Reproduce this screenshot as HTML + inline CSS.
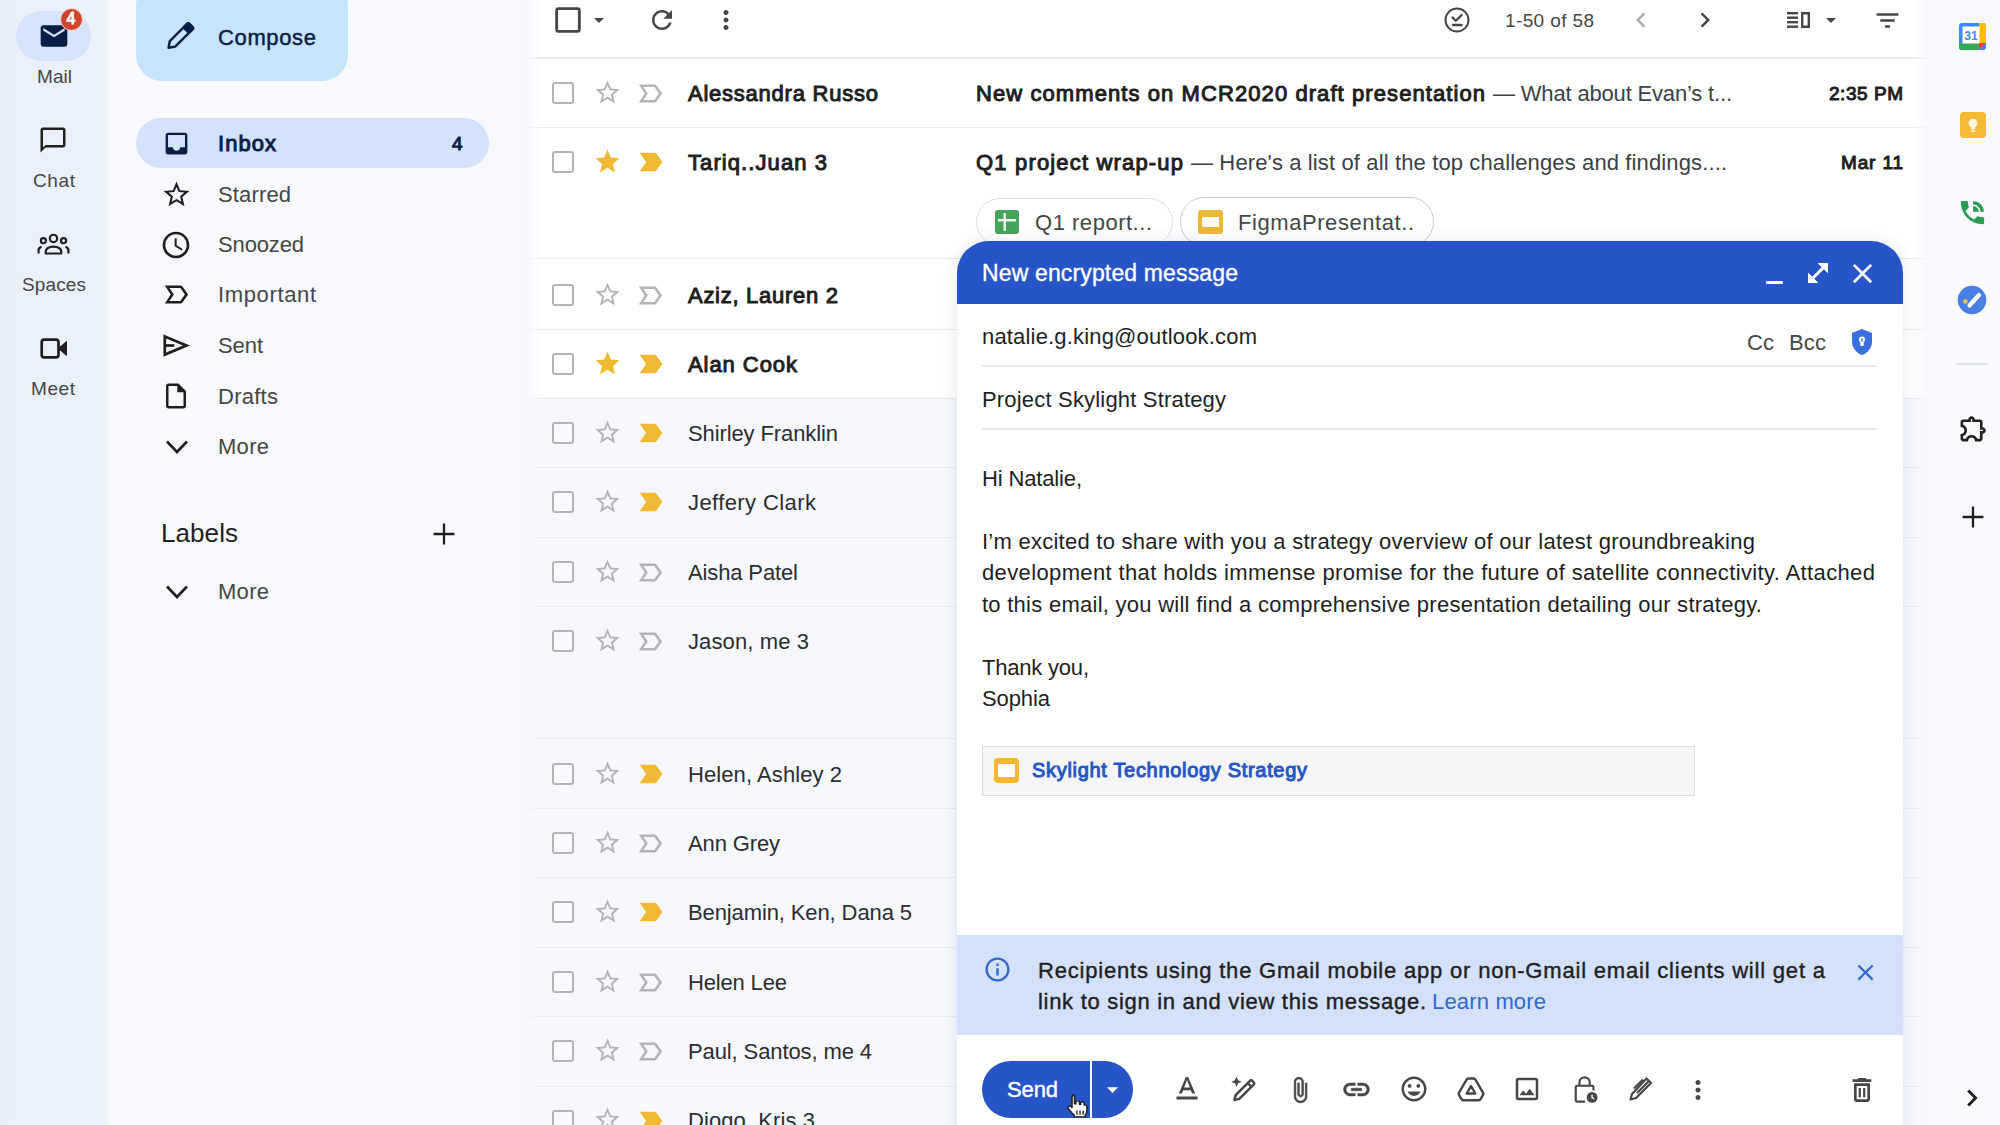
<!DOCTYPE html>
<html><head><meta charset="utf-8"><title>Gmail</title>
<style>
html,body{margin:0;padding:0}
html{width:2000px;height:1125px;overflow:hidden}
body{width:2000px;height:1125px;overflow:hidden;position:relative;background:#f6f8fc;font-family:"Liberation Sans",sans-serif}
.t{position:absolute;white-space:nowrap;margin:0}
.i{position:absolute;display:block;overflow:visible}
.b{position:absolute;box-sizing:border-box}
</style></head><body>
<div class="b" style="left:0px;top:0px;width:124px;height:1125px;background:linear-gradient(90deg,#eaf0fa 0,#ebf1fa 103px,#f7f9fc 112px)"></div>
<div class="b" style="left:124px;top:0px;width:403px;height:1125px;background:#f7f9fc"></div>
<div class="b" style="left:527px;top:0px;width:1401px;height:1125px;background:#ffffff"></div>
<div class="b" style="left:1928px;top:0px;width:72px;height:1125px;background:#f7f9fc"></div>
<div class="b" style="left:16px;top:10.5px;width:75px;height:50px;background:#d5e3fb;border-radius:25px"></div>
<svg class="i" style="left:37.5px;top:19.8px;width:32px;height:32px" viewBox="0 0 24 24" fill="#0b1d44" ><path d="M20 4H4c-1.1 0-1.99.9-1.99 2L2 18c0 1.1.9 2 2 2h16c1.1 0 2-.9 2-2V6c0-1.1-.9-2-2-2zm0 4l-8 5-8-5V6l8 5 8-5v2z"/></svg>
<div class="b" style="left:59.5px;top:7.5px;width:23px;height:23px;background:#d2432f;border-radius:12px;border:1.500px solid #f7e4e1"></div>
<div class="t" style="left:66.5px;top:8.0px;font-size:16px;line-height:22px;color:#fff;letter-spacing:0.102px;-webkit-text-stroke:1.0px #fff;">4</div>
<div class="t" style="left:37px;top:62.5px;font-size:19px;line-height:27px;color:#444746;letter-spacing:0.054px;">Mail</div>
<svg class="i" style="left:38.0px;top:125.0px;width:30px;height:30px" viewBox="0 0 24 24" fill="#1f1f1f" ><path d="M20 2H4c-1.1 0-2 .9-2 2v18l4-4h14c1.1 0 2-.9 2-2V4c0-1.1-.9-2-2-2zm0 14H6l-2 2V4h16v12z"/></svg>
<div class="t" style="left:33px;top:166.8px;font-size:19px;line-height:27px;color:#444746;letter-spacing:0.622px;">Chat</div>
<div class="t" style="left:22px;top:270.8px;font-size:19px;line-height:27px;color:#444746;letter-spacing:0.125px;">Spaces</div>
<svg class="i" style="left:39.500px;top:337.500px;width:28px;height:21px" viewBox="0 0 28 21"><rect x="1.700" y="1.700" width="16.800" height="17.600" rx="2.600" fill="none" stroke="#1f1f1f" stroke-width="2.700"/><path d="M18.500 10.500L26.500 3.500v14z" fill="#1f1f1f" stroke="#1f1f1f" stroke-width="1" stroke-linejoin="round"/></svg>
<div class="t" style="left:31px;top:374.8px;font-size:19px;line-height:27px;color:#444746;letter-spacing:0.587px;">Meet</div>
<svg class="i" style="left:37px;top:231.500px;width:33px;height:23.800px" viewBox="0 0 36 26" fill="none" stroke="#1f1f1f" stroke-width="2.4"><circle cx="18" cy="7" r="4"/><circle cx="7" cy="9.5" r="2.8"/><circle cx="29" cy="9.5" r="2.8"/><path d="M9.500 23.500v-2.200c0-3 3.500-5.300 8.500-5.300s8.500 2.300 8.500 5.300v2.200z" stroke-linejoin="round"/><path d="M5 16.200c-2 .6-3.300 1.900-3.300 3.500v3.800M31 16.200c2 .6 3.300 1.900 3.300 3.500v3.800"/></svg>
<div class="b" style="left:136px;top:-20px;width:212px;height:101px;background:#c6e4fb;border-radius:26px"></div>
<svg class="i" style="left:162px;top:19px;width:36px;height:36px" viewBox="0 0 36 36"><g transform="translate(17.900,17.500) rotate(45)" fill="none" stroke="#0b1d44" stroke-width="2.500" stroke-linejoin="round"><path d="M-2.600-15.500h5.200a1.200 1.200 0 0 1 1.200 1.200V10.500L0 16-3.800 10.500V-14.300a1.200 1.200 0 0 1 1.200-1.200z"/><rect x="-3.800" y="-15.500" width="7.600" height="6.500" rx="1.200" fill="#0b1d44"/></g></svg>
<div class="t" style="left:218px;top:21.5px;font-size:22px;line-height:31px;color:#0b1d44;letter-spacing:0.640px;-webkit-text-stroke:0.45px #0b1d44;">Compose</div>
<div class="b" style="left:136px;top:118px;width:353px;height:50px;background:#d3e3fd;border-radius:25px"></div>
<svg class="i" style="left:161.5px;top:128.5px;width:29px;height:29px" viewBox="0 0 24 24" fill="#0b1d44" ><path d="M19 3H4.99c-1.11 0-1.98.89-1.98 2L3 19c0 1.1.88 2 1.99 2H19c1.1 0 2-.9 2-2V5c0-1.11-.9-2-2-2zm0 12h-4c0 1.66-1.35 3-3 3s-3-1.34-3-3H4.99V5H19v10z"/></svg>
<div class="t" style="left:218px;top:127.5px;font-size:22px;line-height:31px;color:#0b1d44;letter-spacing:1.045px;-webkit-text-stroke:1.0px #0b1d44;">Inbox</div>
<div class="t" style="left:452px;top:129.5px;font-size:19px;line-height:27px;color:#0b1d44;letter-spacing:-0.567px;-webkit-text-stroke:1.0px #0b1d44;">4</div>
<svg class="i" style="left:160.5px;top:178.5px;width:31px;height:31px" viewBox="0 0 24 24" fill="#1f1f1f" ><path d="M22 9.24l-7.19-.62L12 2 9.19 8.63 2 9.24l5.46 4.73L5.82 21 12 17.27 18.18 21l-1.63-7.03L22 9.24zM12 15.4l-3.76 2.27 1-4.28-3.32-2.88 4.38-.38L12 6.1l1.71 4.04 4.38.38-3.32 2.88 1 4.28L12 15.4z"/></svg>
<div class="t" style="left:218px;top:178.5px;font-size:22px;line-height:31px;color:#444746;letter-spacing:0.142px;">Starred</div>
<svg class="i" style="left:160.0px;top:228.5px;width:32px;height:32px" viewBox="0 0 24 24" fill="#1f1f1f" ><path d="M11.99 2C6.47 2 2 6.48 2 12s4.47 10 9.99 10C17.52 22 22 17.52 22 12S17.52 2 11.99 2zM12 20c-4.42 0-8-3.58-8-8s3.58-8 8-8 8 3.58 8 8-3.58 8-8 8zm.5-13H11v6l5.25 3.15.75-1.23-4.5-2.67z"/></svg>
<div class="t" style="left:218px;top:229.0px;font-size:22px;line-height:31px;color:#444746;letter-spacing:-0.142px;">Snoozed</div>
<svg class="i" style="left:160.5px;top:278.8px;width:31px;height:31px" viewBox="0 0 24 24" fill="#1f1f1f" ><path d="M15 19H3l4.5-7L3 5h12c.65 0 1.26.31 1.63.84L21 12l-4.37 6.16c-.37.52-.98.84-1.63.84zm-8.5-2H15l3.5-5L15 7H6.5l3.5 5-3.5 5z"/></svg>
<div class="t" style="left:218px;top:278.8px;font-size:22px;line-height:31px;color:#444746;letter-spacing:0.633px;">Important</div>
<svg class="i" style="left:162px;top:333px;width:28px;height:25px" viewBox="0 0 28 25" fill="none" stroke="#1f1f1f" stroke-width="2.700" stroke-linejoin="miter"><path d="M2.800 3.400L24.500 12.500 2.800 21.600z"/><path d="M2.800 12.500h9.500"/></svg>
<div class="t" style="left:218px;top:329.5px;font-size:22px;line-height:31px;color:#444746;letter-spacing:-0.086px;">Sent</div>
<svg class="i" style="left:161.0px;top:381.0px;width:30px;height:30px" viewBox="0 0 24 24" fill="#1f1f1f" ><path d="M14 2H6c-1.1 0-1.99.9-1.99 2L4 20c0 1.1.89 2 1.99 2H18c1.1 0 2-.9 2-2V8l-6-6zM6 20V4h7v5h5v11H6z"/></svg>
<div class="t" style="left:218px;top:380.5px;font-size:22px;line-height:31px;color:#444746;letter-spacing:0.265px;">Drafts</div>
<svg class="i" style="left:165px;top:439px;width:24px;height:16px" viewBox="0 0 24 16" fill="none" stroke="#1f1f1f" stroke-width="2.600"><path d="M2 2.500l10 10.500 10-10.500"/></svg>
<div class="t" style="left:218px;top:430.5px;font-size:22px;line-height:31px;color:#444746;letter-spacing:0.292px;">More</div>
<div class="t" style="left:161px;top:515.0px;font-size:26px;line-height:36px;color:#1f1f1f;letter-spacing:0.077px;">Labels</div>
<svg class="i" style="left:433px;top:523px;width:22px;height:22px" viewBox="0 0 22 22" stroke="#1f1f1f" stroke-width="2.300"><path d="M11 0.500v21M0.500 11h21"/></svg>
<svg class="i" style="left:165px;top:584px;width:24px;height:16px" viewBox="0 0 24 16" fill="none" stroke="#1f1f1f" stroke-width="2.600"><path d="M2 2.500l10 10.500 10-10.500"/></svg>
<div class="t" style="left:218px;top:575.5px;font-size:22px;line-height:31px;color:#444746;letter-spacing:0.292px;">More</div>
<svg class="i" style="left:551.0px;top:3.0px;width:34px;height:34px" viewBox="0 0 24 24" fill="#444746" ><path d="M19 5v14H5V5h14m0-2H5c-1.100 0-2 .9-2 2v14c0 1.100.9 2 2 2h14c1.100 0 2-.9 2-2V5c0-1.100-.9-2-2-2z"/></svg>
<svg class="i" style="left:587.0px;top:8.0px;width:24px;height:24px" viewBox="0 0 24 24" fill="#444746" ><path d="M7 10l5 5 5-5z"/></svg>
<svg class="i" style="left:647.0px;top:5.0px;width:30px;height:30px" viewBox="0 0 24 24" fill="#444746" ><path d="M17.65 6.35C16.2 4.9 14.21 4 12 4c-4.42 0-7.99 3.58-7.99 8s3.57 8 7.99 8c3.73 0 6.84-2.55 7.73-6h-2.08c-.82 2.33-3.04 4-5.65 4-3.31 0-6-2.69-6-6s2.69-6 6-6c1.66 0 3.14.69 4.22 1.78L13 11h7V4l-2.35 2.35z"/></svg>
<svg class="i" style="left:711.0px;top:5.0px;width:30px;height:30px" viewBox="0 0 24 24" fill="#444746" ><path d="M12 8c1.1 0 2-.9 2-2s-.9-2-2-2-2 .9-2 2 .9 2 2 2zm0 2c-1.1 0-2 .9-2 2s.9 2 2 2 2-.9 2-2-.9-2-2-2zm0 6c-1.1 0-2 .9-2 2s.9 2 2 2 2-.9 2-2-.9-2-2-2z"/></svg>
<svg class="i" style="left:1443px;top:6px;width:28px;height:28px" viewBox="0 0 28 28" fill="none" stroke="#444746" stroke-width="2"><circle cx="14" cy="14" r="11.500"/><path d="M9.500 11.500l3.300 3.300 5.800-5.800M10 19h8.500" stroke-linecap="round" stroke-linejoin="round" stroke-width="2.300"/></svg>
<div class="t" style="left:1505px;top:6.5px;font-size:19px;line-height:27px;color:#444746;letter-spacing:0.382px;">1-50 of 58</div>
<svg class="i" style="left:1626.0px;top:5.0px;width:30px;height:30px" viewBox="0 0 24 24" fill="#a9adb3" ><path d="M15.41 7.41L14 6l-6 6 6 6 1.41-1.41L10.83 12z"/></svg>
<svg class="i" style="left:1690.0px;top:5.0px;width:30px;height:30px" viewBox="0 0 24 24" fill="#444746" ><path d="M10 6L8.59 7.41 13.17 12l-4.58 4.59L10 18l6-6z"/></svg>
<svg class="i" style="left:1787px;top:11px;width:24px;height:18px" viewBox="0 0 24 18" fill="#444746"><rect x="0" y="1" width="11" height="2.400"/><rect x="0" y="5.500" width="11" height="2.400"/><rect x="0" y="10" width="11" height="2.400"/><rect x="0" y="14.500" width="11" height="2.400"/><path d="M14 1h9v16h-9zm2.400 2.400v11.200h4.200V3.400z" fill-rule="evenodd"/></svg>
<svg class="i" style="left:1819.0px;top:8.0px;width:24px;height:24px" viewBox="0 0 24 24" fill="#444746" ><path d="M7 10l5 5 5-5z"/></svg>
<svg class="i" style="left:1872.5px;top:5.5px;width:29px;height:29px" viewBox="0 0 24 24" fill="#444746" ><path d="M10 18h4v-2h-4v2zM3 6v2h18V6H3zm3 7h12v-2H6v2z"/></svg>
<div class="b" style="left:527px;top:58px;width:1401px;height:70px;background:#fff;border-bottom:1.500px solid #e9ebf0"></div>
<div class="b" style="left:552px;top:82px;width:22px;height:22px;border:2px solid #b3b4b8;border-radius:3px;background:#fff"></div>
<svg class="i" style="left:592.5px;top:77.5px;width:29px;height:29px" viewBox="0 0 24 24" fill="#b3b4b8" ><path d="M22 9.24l-7.19-.62L12 2 9.19 8.63 2 9.24l5.46 4.73L5.82 21 12 17.27 18.18 21l-1.63-7.03L22 9.24zM12 15.4l-3.76 2.27 1-4.28-3.32-2.88 4.38-.38L12 6.1l1.71 4.04 4.38.38-3.32 2.88 1 4.28L12 15.4z"/></svg>
<svg class="i" style="left:634.5px;top:77.5px;width:31px;height:31px" viewBox="0 0 24 24" fill="#b3b4b8" ><path d="M15 19H3l4.5-7L3 5h12c.65 0 1.26.31 1.63.84L21 12l-4.37 6.16c-.37.52-.98.84-1.63.84zm-8.5-2H15l3.5-5L15 7H6.5l3.5 5-3.5 5z"/></svg>
<div class="t" style="left:688px;top:77.5px;font-size:22px;line-height:31px;color:#1f1f1f;letter-spacing:0.764px;-webkit-text-stroke:1.0px #1f1f1f;">Alessandra Russo</div>
<div class="b" style="left:527px;top:128px;width:1401px;height:131px;background:#fff;border-bottom:1.500px solid #e9ebf0"></div>
<div class="b" style="left:552px;top:151px;width:22px;height:22px;border:2px solid #b3b4b8;border-radius:3px;background:#fff"></div>
<svg class="i" style="left:592.5px;top:146.5px;width:29px;height:29px" viewBox="0 0 24 24" fill="#f1b932" ><path d="M12 17.27L18.18 21l-1.64-7.03L22 9.24l-7.19-.61L12 2 9.19 8.63 2 9.24l5.46 4.73L5.82 21z"/></svg>
<svg class="i" style="left:635.0px;top:146.0px;width:32px;height:32px" viewBox="0 0 24 24" fill="#f1b932" ><path d="M3.5 18.99l11 .01c.67 0 1.27-.33 1.63-.84L20.5 12l-4.37-6.16c-.36-.51-.96-.84-1.63-.84l-11 .01L8.34 12 3.5 18.99z"/></svg>
<div class="t" style="left:688px;top:146.5px;font-size:22px;line-height:31px;color:#1f1f1f;letter-spacing:1.086px;-webkit-text-stroke:1.0px #1f1f1f;">Tariq..Juan 3</div>
<div class="b" style="left:527px;top:260px;width:1401px;height:70px;background:#fff;border-bottom:1.500px solid #e9ebf0"></div>
<div class="b" style="left:552px;top:284px;width:22px;height:22px;border:2px solid #b3b4b8;border-radius:3px;background:#fff"></div>
<svg class="i" style="left:592.5px;top:279.5px;width:29px;height:29px" viewBox="0 0 24 24" fill="#b3b4b8" ><path d="M22 9.24l-7.19-.62L12 2 9.19 8.63 2 9.24l5.46 4.73L5.82 21 12 17.27 18.18 21l-1.63-7.03L22 9.24zM12 15.4l-3.76 2.27 1-4.28-3.32-2.88 4.38-.38L12 6.1l1.71 4.04 4.38.38-3.32 2.88 1 4.28L12 15.4z"/></svg>
<svg class="i" style="left:634.5px;top:279.5px;width:31px;height:31px" viewBox="0 0 24 24" fill="#b3b4b8" ><path d="M15 19H3l4.5-7L3 5h12c.65 0 1.26.31 1.63.84L21 12l-4.37 6.16c-.37.52-.98.84-1.63.84zm-8.5-2H15l3.5-5L15 7H6.5l3.5 5-3.5 5z"/></svg>
<div class="t" style="left:688px;top:279.5px;font-size:22px;line-height:31px;color:#1f1f1f;letter-spacing:0.720px;-webkit-text-stroke:1.0px #1f1f1f;">Aziz, Lauren 2</div>
<div class="b" style="left:527px;top:330px;width:1401px;height:69px;background:#fff;border-bottom:1.500px solid #e9ebf0"></div>
<div class="b" style="left:552px;top:353px;width:22px;height:22px;border:2px solid #b3b4b8;border-radius:3px;background:#fff"></div>
<svg class="i" style="left:592.5px;top:348.5px;width:29px;height:29px" viewBox="0 0 24 24" fill="#f1b932" ><path d="M12 17.27L18.18 21l-1.64-7.03L22 9.24l-7.19-.61L12 2 9.19 8.63 2 9.24l5.46 4.73L5.82 21z"/></svg>
<svg class="i" style="left:635.0px;top:348.0px;width:32px;height:32px" viewBox="0 0 24 24" fill="#f1b932" ><path d="M3.5 18.99l11 .01c.67 0 1.27-.33 1.63-.84L20.5 12l-4.37-6.16c-.36-.51-.96-.84-1.63-.84l-11 .01L8.34 12 3.5 18.99z"/></svg>
<div class="t" style="left:688px;top:348.5px;font-size:22px;line-height:31px;color:#1f1f1f;letter-spacing:0.937px;-webkit-text-stroke:1.0px #1f1f1f;">Alan Cook</div>
<div class="b" style="left:527px;top:399px;width:1401px;height:69px;background:#f6f8fd;border-bottom:1.500px solid #e9ebf0"></div>
<div class="b" style="left:552px;top:422px;width:22px;height:22px;border:2px solid #b3b4b8;border-radius:3px;background:#f8fafd"></div>
<svg class="i" style="left:592.5px;top:417.5px;width:29px;height:29px" viewBox="0 0 24 24" fill="#b3b4b8" ><path d="M22 9.24l-7.19-.62L12 2 9.19 8.63 2 9.24l5.46 4.73L5.82 21 12 17.27 18.18 21l-1.63-7.03L22 9.24zM12 15.4l-3.76 2.27 1-4.28-3.32-2.88 4.38-.38L12 6.1l1.71 4.04 4.38.38-3.32 2.88 1 4.28L12 15.4z"/></svg>
<svg class="i" style="left:635.0px;top:417.0px;width:32px;height:32px" viewBox="0 0 24 24" fill="#f1b932" ><path d="M3.5 18.99l11 .01c.67 0 1.27-.33 1.63-.84L20.5 12l-4.37-6.16c-.36-.51-.96-.84-1.63-.84l-11 .01L8.34 12 3.5 18.99z"/></svg>
<div class="t" style="left:688px;top:417.5px;font-size:22px;line-height:31px;color:#2b2d30;letter-spacing:-0.107px;">Shirley Franklin</div>
<div class="b" style="left:527px;top:468px;width:1401px;height:70px;background:#f6f8fd;border-bottom:1.500px solid #e9ebf0"></div>
<div class="b" style="left:552px;top:491px;width:22px;height:22px;border:2px solid #b3b4b8;border-radius:3px;background:#f8fafd"></div>
<svg class="i" style="left:592.5px;top:486.5px;width:29px;height:29px" viewBox="0 0 24 24" fill="#b3b4b8" ><path d="M22 9.24l-7.19-.62L12 2 9.19 8.63 2 9.24l5.46 4.73L5.82 21 12 17.27 18.18 21l-1.63-7.03L22 9.24zM12 15.4l-3.76 2.27 1-4.28-3.32-2.88 4.38-.38L12 6.1l1.71 4.04 4.38.38-3.32 2.88 1 4.28L12 15.4z"/></svg>
<svg class="i" style="left:635.0px;top:486.0px;width:32px;height:32px" viewBox="0 0 24 24" fill="#f1b932" ><path d="M3.5 18.99l11 .01c.67 0 1.27-.33 1.63-.84L20.5 12l-4.37-6.16c-.36-.51-.96-.84-1.63-.84l-11 .01L8.34 12 3.5 18.99z"/></svg>
<div class="t" style="left:688px;top:486.5px;font-size:22px;line-height:31px;color:#2b2d30;letter-spacing:0.410px;">Jeffery Clark</div>
<div class="b" style="left:527px;top:538px;width:1401px;height:69px;background:#f6f8fd;border-bottom:1.500px solid #e9ebf0"></div>
<div class="b" style="left:552px;top:561px;width:22px;height:22px;border:2px solid #b3b4b8;border-radius:3px;background:#f8fafd"></div>
<svg class="i" style="left:592.5px;top:556.5px;width:29px;height:29px" viewBox="0 0 24 24" fill="#b3b4b8" ><path d="M22 9.24l-7.19-.62L12 2 9.19 8.63 2 9.24l5.46 4.73L5.82 21 12 17.27 18.18 21l-1.63-7.03L22 9.24zM12 15.4l-3.76 2.27 1-4.28-3.32-2.88 4.38-.38L12 6.1l1.71 4.04 4.38.38-3.32 2.88 1 4.28L12 15.4z"/></svg>
<svg class="i" style="left:634.5px;top:556.5px;width:31px;height:31px" viewBox="0 0 24 24" fill="#b3b4b8" ><path d="M15 19H3l4.5-7L3 5h12c.65 0 1.26.31 1.63.84L21 12l-4.37 6.16c-.37.52-.98.84-1.63.84zm-8.5-2H15l3.5-5L15 7H6.5l3.5 5-3.5 5z"/></svg>
<div class="t" style="left:688px;top:556.5px;font-size:22px;line-height:31px;color:#2b2d30;letter-spacing:-0.129px;">Aisha Patel</div>
<div class="b" style="left:527px;top:607px;width:1401px;height:132px;background:#f6f8fd;border-bottom:1.500px solid #e9ebf0"></div>
<div class="b" style="left:552px;top:630px;width:22px;height:22px;border:2px solid #b3b4b8;border-radius:3px;background:#f8fafd"></div>
<svg class="i" style="left:592.5px;top:625.5px;width:29px;height:29px" viewBox="0 0 24 24" fill="#b3b4b8" ><path d="M22 9.24l-7.19-.62L12 2 9.19 8.63 2 9.24l5.46 4.73L5.82 21 12 17.27 18.18 21l-1.63-7.03L22 9.24zM12 15.4l-3.76 2.27 1-4.28-3.32-2.88 4.38-.38L12 6.1l1.71 4.04 4.38.38-3.32 2.88 1 4.28L12 15.4z"/></svg>
<svg class="i" style="left:634.5px;top:625.5px;width:31px;height:31px" viewBox="0 0 24 24" fill="#b3b4b8" ><path d="M15 19H3l4.5-7L3 5h12c.65 0 1.26.31 1.63.84L21 12l-4.37 6.16c-.37.52-.98.84-1.63.84zm-8.5-2H15l3.5-5L15 7H6.5l3.5 5-3.5 5z"/></svg>
<div class="t" style="left:688px;top:625.5px;font-size:22px;line-height:31px;color:#2b2d30;letter-spacing:0.116px;">Jason, me 3</div>
<div class="b" style="left:527px;top:739px;width:1401px;height:70px;background:#f6f8fd;border-bottom:1.500px solid #e9ebf0"></div>
<div class="b" style="left:552px;top:763px;width:22px;height:22px;border:2px solid #b3b4b8;border-radius:3px;background:#f8fafd"></div>
<svg class="i" style="left:592.5px;top:758.5px;width:29px;height:29px" viewBox="0 0 24 24" fill="#b3b4b8" ><path d="M22 9.24l-7.19-.62L12 2 9.19 8.63 2 9.24l5.46 4.73L5.82 21 12 17.27 18.18 21l-1.63-7.03L22 9.24zM12 15.4l-3.76 2.27 1-4.28-3.32-2.88 4.38-.38L12 6.1l1.71 4.04 4.38.38-3.32 2.88 1 4.28L12 15.4z"/></svg>
<svg class="i" style="left:635.0px;top:758.0px;width:32px;height:32px" viewBox="0 0 24 24" fill="#f1b932" ><path d="M3.5 18.99l11 .01c.67 0 1.27-.33 1.63-.84L20.5 12l-4.37-6.16c-.36-.51-.96-.84-1.63-.84l-11 .01L8.34 12 3.5 18.99z"/></svg>
<div class="t" style="left:688px;top:758.5px;font-size:22px;line-height:31px;color:#2b2d30;letter-spacing:0.080px;">Helen, Ashley 2</div>
<div class="b" style="left:527px;top:809px;width:1401px;height:69px;background:#f6f8fd;border-bottom:1.500px solid #e9ebf0"></div>
<div class="b" style="left:552px;top:832px;width:22px;height:22px;border:2px solid #b3b4b8;border-radius:3px;background:#f8fafd"></div>
<svg class="i" style="left:592.5px;top:827.5px;width:29px;height:29px" viewBox="0 0 24 24" fill="#b3b4b8" ><path d="M22 9.24l-7.19-.62L12 2 9.19 8.63 2 9.24l5.46 4.73L5.82 21 12 17.27 18.18 21l-1.63-7.03L22 9.24zM12 15.4l-3.76 2.27 1-4.28-3.32-2.88 4.38-.38L12 6.1l1.71 4.04 4.38.38-3.32 2.88 1 4.28L12 15.4z"/></svg>
<svg class="i" style="left:634.5px;top:827.5px;width:31px;height:31px" viewBox="0 0 24 24" fill="#b3b4b8" ><path d="M15 19H3l4.5-7L3 5h12c.65 0 1.26.31 1.63.84L21 12l-4.37 6.16c-.37.52-.98.84-1.63.84zm-8.5-2H15l3.5-5L15 7H6.5l3.5 5-3.5 5z"/></svg>
<div class="t" style="left:688px;top:827.5px;font-size:22px;line-height:31px;color:#2b2d30;letter-spacing:-0.133px;">Ann Grey</div>
<div class="b" style="left:527px;top:878px;width:1401px;height:70px;background:#f6f8fd;border-bottom:1.500px solid #e9ebf0"></div>
<div class="b" style="left:552px;top:901px;width:22px;height:22px;border:2px solid #b3b4b8;border-radius:3px;background:#f8fafd"></div>
<svg class="i" style="left:592.5px;top:896.5px;width:29px;height:29px" viewBox="0 0 24 24" fill="#b3b4b8" ><path d="M22 9.24l-7.19-.62L12 2 9.19 8.63 2 9.24l5.46 4.73L5.82 21 12 17.27 18.18 21l-1.63-7.03L22 9.24zM12 15.4l-3.76 2.27 1-4.28-3.32-2.88 4.38-.38L12 6.1l1.71 4.04 4.38.38-3.32 2.88 1 4.28L12 15.4z"/></svg>
<svg class="i" style="left:635.0px;top:896.0px;width:32px;height:32px" viewBox="0 0 24 24" fill="#f1b932" ><path d="M3.5 18.99l11 .01c.67 0 1.27-.33 1.63-.84L20.5 12l-4.37-6.16c-.36-.51-.96-.84-1.63-.84l-11 .01L8.34 12 3.5 18.99z"/></svg>
<div class="t" style="left:688px;top:896.5px;font-size:22px;line-height:31px;color:#2b2d30;letter-spacing:-0.113px;">Benjamin, Ken, Dana 5</div>
<div class="b" style="left:527px;top:948px;width:1401px;height:69px;background:#f6f8fd;border-bottom:1.500px solid #e9ebf0"></div>
<div class="b" style="left:552px;top:971px;width:22px;height:22px;border:2px solid #b3b4b8;border-radius:3px;background:#f8fafd"></div>
<svg class="i" style="left:592.5px;top:966.5px;width:29px;height:29px" viewBox="0 0 24 24" fill="#b3b4b8" ><path d="M22 9.24l-7.19-.62L12 2 9.19 8.63 2 9.24l5.46 4.73L5.82 21 12 17.27 18.18 21l-1.63-7.03L22 9.24zM12 15.4l-3.76 2.27 1-4.28-3.32-2.88 4.38-.38L12 6.1l1.71 4.04 4.38.38-3.32 2.88 1 4.28L12 15.4z"/></svg>
<svg class="i" style="left:634.5px;top:966.5px;width:31px;height:31px" viewBox="0 0 24 24" fill="#b3b4b8" ><path d="M15 19H3l4.5-7L3 5h12c.65 0 1.26.31 1.63.84L21 12l-4.37 6.16c-.37.52-.98.84-1.63.84zm-8.5-2H15l3.5-5L15 7H6.5l3.5 5-3.5 5z"/></svg>
<div class="t" style="left:688px;top:966.5px;font-size:22px;line-height:31px;color:#2b2d30;letter-spacing:-0.163px;">Helen Lee</div>
<div class="b" style="left:527px;top:1017px;width:1401px;height:70px;background:#f6f8fd;border-bottom:1.500px solid #e9ebf0"></div>
<div class="b" style="left:552px;top:1040px;width:22px;height:22px;border:2px solid #b3b4b8;border-radius:3px;background:#f8fafd"></div>
<svg class="i" style="left:592.5px;top:1035.5px;width:29px;height:29px" viewBox="0 0 24 24" fill="#b3b4b8" ><path d="M22 9.24l-7.19-.62L12 2 9.19 8.63 2 9.24l5.46 4.73L5.82 21 12 17.27 18.18 21l-1.63-7.03L22 9.24zM12 15.4l-3.76 2.27 1-4.28-3.32-2.88 4.38-.38L12 6.1l1.71 4.04 4.38.38-3.32 2.88 1 4.28L12 15.4z"/></svg>
<svg class="i" style="left:634.5px;top:1035.5px;width:31px;height:31px" viewBox="0 0 24 24" fill="#b3b4b8" ><path d="M15 19H3l4.5-7L3 5h12c.65 0 1.26.31 1.63.84L21 12l-4.37 6.16c-.37.52-.98.84-1.63.84zm-8.5-2H15l3.5-5L15 7H6.5l3.5 5-3.5 5z"/></svg>
<div class="t" style="left:688px;top:1035.5px;font-size:22px;line-height:31px;color:#2b2d30;letter-spacing:-0.111px;">Paul, Santos, me 4</div>
<div class="b" style="left:527px;top:1087px;width:1401px;height:74px;background:#f6f8fd;border-bottom:1.500px solid #e9ebf0"></div>
<div class="b" style="left:552px;top:1109.5px;width:22px;height:22px;border:2px solid #b3b4b8;border-radius:3px;background:#f8fafd"></div>
<svg class="i" style="left:592.5px;top:1105.0px;width:29px;height:29px" viewBox="0 0 24 24" fill="#b3b4b8" ><path d="M22 9.24l-7.19-.62L12 2 9.19 8.63 2 9.24l5.46 4.73L5.82 21 12 17.27 18.18 21l-1.63-7.03L22 9.24zM12 15.4l-3.76 2.27 1-4.28-3.32-2.88 4.38-.38L12 6.1l1.71 4.04 4.38.38-3.32 2.88 1 4.28L12 15.4z"/></svg>
<svg class="i" style="left:635.0px;top:1104.5px;width:32px;height:32px" viewBox="0 0 24 24" fill="#f1b932" ><path d="M3.5 18.99l11 .01c.67 0 1.27-.33 1.63-.84L20.5 12l-4.37-6.16c-.36-.51-.96-.84-1.63-.84l-11 .01L8.34 12 3.5 18.99z"/></svg>
<div class="t" style="left:688px;top:1105.0px;font-size:22px;line-height:31px;color:#2b2d30;letter-spacing:0.088px;">Diogo, Kris 3</div>
<div class="b" style="left:527px;top:57px;width:1401px;height:1.5px;background:#e9ebf0"></div>
<div class="b" style="left:519px;top:0px;width:22px;height:1125px;background:linear-gradient(90deg,#f6f8fc 0,#f6f8fc 8px,rgba(246,248,252,0) 100%)"></div>
<div class="b" style="left:1912px;top:0px;width:18px;height:1125px;background:linear-gradient(90deg,rgba(246,248,252,0) 0,#f6f8fc 100%)"></div>
<div class="t" style="left:976px;top:77.5px;font-size:22px;line-height:31px;color:#1f1f1f;letter-spacing:1.081px;-webkit-text-stroke:1.0px #1f1f1f;">New comments on MCR2020 draft presentation</div>
<div class="t" style="left:1493px;top:77.5px;font-size:22px;line-height:31px;color:#3c4043;letter-spacing:-0.171px;">— What about Evan’s t...</div>
<div class="t" style="left:1829px;top:79.5px;font-size:19px;line-height:27px;color:#1f1f1f;letter-spacing:0.540px;-webkit-text-stroke:1.0px #1f1f1f;">2:35 PM</div>
<div class="t" style="left:976px;top:146.5px;font-size:22px;line-height:31px;color:#1f1f1f;letter-spacing:1.171px;-webkit-text-stroke:1.0px #1f1f1f;">Q1 project wrap-up</div>
<div class="t" style="left:1191px;top:146.5px;font-size:22px;line-height:31px;color:#3c4043;letter-spacing:0.126px;">— Here's a list of all the top challenges and findings....</div>
<div class="t" style="left:1841px;top:148.5px;font-size:19px;line-height:27px;color:#1f1f1f;letter-spacing:0.855px;-webkit-text-stroke:1.0px #1f1f1f;">Mar 11</div>
<div class="b" style="left:976px;top:198px;width:197px;height:48px;border:1.500px solid #dcdfe4;border-radius:24px;background:#fff"></div>
<div class="b" style="left:995px;top:210px;width:24px;height:24px;background:#47a35c;border-radius:3px"></div>
<svg class="i" style="left:998px;top:213px;width:18px;height:18px" viewBox="0 0 18 18" fill="#eef7ef"><rect x="5.500" y="0" width="2.400" height="18"/><rect x="0" y="6" width="18" height="2.400"/></svg>
<div class="t" style="left:1035px;top:206.5px;font-size:22px;line-height:31px;color:#444746;letter-spacing:0.521px;">Q1 report...</div>
<div class="b" style="left:1180px;top:197px;width:254px;height:49px;border:1.500px solid #c9ccd1;border-radius:24px;background:#fff"></div>
<div class="b" style="left:1198px;top:210px;width:25px;height:24px;background:#ecb83a;border-radius:3px"></div>
<div class="b" style="left:1202px;top:217px;width:17px;height:10px;background:#fffdf5;border-radius:1px"></div>
<div class="t" style="left:1238px;top:206.5px;font-size:22px;line-height:31px;color:#444746;letter-spacing:0.565px;">FigmaPresentat..</div>
<div class="b" style="left:957px;top:241px;width:946px;height:900px;background:#fff;border-radius:32px 32px 0 0;box-shadow:0 0 14px 3px rgba(70,90,140,.10)"></div>
<div class="b" style="left:957px;top:241px;width:946px;height:63px;background:#2755c7;border-radius:32px 32px 0 0"></div>
<div class="t" style="left:982px;top:256.5px;font-size:23px;line-height:32px;color:#fff;letter-spacing:0.143px;-webkit-text-stroke:0.350px #fff;">New encrypted message</div>
<div class="b" style="left:1766px;top:280.5px;width:16.5px;height:3px;background:#fff;border-radius:1px"></div>
<svg class="i" style="left:1806px;top:261px;width:24px;height:24px" viewBox="0 0 24 24" fill="#fff" stroke="#fff"><path d="M12.500 2.500h9v9l-3.300-3.300z M11.500 21.500h-9v-9l3.300 3.300z" stroke-width="1" stroke-linejoin="round"/><path d="M18.500 5.500l-13 13" stroke-width="3"/></svg>
<svg class="i" style="left:1846.0px;top:256.5px;width:33px;height:33px" viewBox="0 0 24 24" fill="#fff" ><path d="M19 6.41L17.59 5 12 10.59 6.41 5 5 6.41 10.59 12 5 17.59 6.41 19 12 13.41 17.59 19 19 17.59 13.41 12z"/></svg>
<div class="t" style="left:982px;top:320.5px;font-size:22px;line-height:31px;color:#1f1f1f;letter-spacing:0.176px;">natalie.g.king@outlook.com</div>
<div class="t" style="left:1747px;top:326.5px;font-size:22px;line-height:31px;color:#444746;letter-spacing:0.113px;">Cc</div>
<div class="t" style="left:1789px;top:326.5px;font-size:22px;line-height:31px;color:#444746;letter-spacing:0.163px;">Bcc</div>
<svg class="i" style="left:1850px;top:328px;width:24px;height:28px" viewBox="0 0 24 28"><path d="M12 1L2 5v8.500c0 6.200 4.300 11.600 10 13.500 5.700-1.900 10-7.300 10-13.500V5z" fill="#3a6fe0"/><circle cx="12" cy="11.500" r="3" fill="#fff"/><rect x="10.200" y="11.500" width="3.600" height="6.500" rx="1" fill="#fff"/><rect x="11.300" y="10.400" width="1.400" height="3.200" fill="#3a6fe0"/></svg>
<div class="b" style="left:982px;top:365.2px;width:895px;height:1.7px;background:#e8e9ec"></div>
<div class="t" style="left:982px;top:383.5px;font-size:22px;line-height:31px;color:#1f1f1f;letter-spacing:0.181px;">Project Skylight Strategy</div>
<div class="b" style="left:982px;top:428.2px;width:895px;height:1.7px;background:#e8e9ec"></div>
<div class="t" style="left:982px;top:462.5px;font-size:22px;line-height:31px;color:#1f1f1f;letter-spacing:-0.148px;">Hi Natalie,</div>
<div class="t" style="left:982px;top:525.5px;font-size:22px;line-height:31px;color:#1f1f1f;letter-spacing:0.256px;">I’m excited to share with you a strategy overview of our latest groundbreaking</div>
<div class="t" style="left:982px;top:556.5px;font-size:22px;line-height:31px;color:#1f1f1f;letter-spacing:0.369px;">development that holds immense promise for the future of satellite connectivity. Attached</div>
<div class="t" style="left:982px;top:588.5px;font-size:22px;line-height:31px;color:#1f1f1f;letter-spacing:0.262px;">to this email, you will find a comprehensive presentation detailing our strategy.</div>
<div class="t" style="left:982px;top:651.5px;font-size:22px;line-height:31px;color:#1f1f1f;letter-spacing:-0.205px;">Thank you,</div>
<div class="t" style="left:982px;top:682.5px;font-size:22px;line-height:31px;color:#1f1f1f;letter-spacing:-0.101px;">Sophia</div>
<div class="b" style="left:982px;top:746px;width:713px;height:50px;background:#f5f5f5;border:1.500px solid #dcdcdc"></div>
<div class="b" style="left:994px;top:758px;width:25px;height:25px;background:#f4b731;border-radius:4px"></div>
<div class="b" style="left:998px;top:764px;width:17px;height:13px;background:#fff;border-radius:1px"></div>
<div class="t" style="left:1032px;top:756.0px;font-size:20px;line-height:28px;color:#2457c5;letter-spacing:0.687px;-webkit-text-stroke:1.0px #2457c5;">Skylight Technology Strategy</div>
<div class="b" style="left:957px;top:934.5px;width:946px;height:100.5px;background:#d4e1fa"></div>
<svg class="i" style="left:982.5px;top:954.5px;width:29px;height:29px" viewBox="0 0 24 24" fill="#3468d0" ><path d="M11 7h2v2h-2zm0 4h2v6h-2zm1-9C6.480 2 2 6.480 2 12s4.480 10 10 10 10-4.480 10-10S17.520 2 12 2zm0 18c-4.410 0-8-3.590-8-8s3.590-8 8-8 8 3.590 8 8-3.590 8-8 8z"/></svg>
<div class="t" style="left:1038px;top:954.5px;font-size:22px;line-height:31px;color:#1f1f1f;letter-spacing:0.803px;-webkit-text-stroke:0.400px #1f1f1f;">Recipients using the Gmail mobile app or non-Gmail email clients will get a</div>
<div class="t" style="left:1038px;top:985.5px;font-size:22px;line-height:31px;color:#1f1f1f;letter-spacing:0.704px;-webkit-text-stroke:0.400px #1f1f1f;">link to sign in and view this message.</div>
<div class="t" style="left:1432px;top:985.5px;font-size:22px;line-height:31px;color:#3267d3;letter-spacing:0.166px;">Learn more</div>
<svg class="i" style="left:1851.5px;top:958.5px;width:27px;height:27px" viewBox="0 0 24 24" fill="#3267d3" ><path d="M19 6.41L17.59 5 12 10.59 6.41 5 5 6.41 10.59 12 5 17.59 6.41 19 12 13.41 17.59 19 19 17.59 13.41 12z"/></svg>
<div class="b" style="left:982px;top:1061px;width:151px;height:57px;background:#2755c7;border-radius:29px"></div>
<div class="b" style="left:1090.2px;top:1061px;width:2px;height:57px;background:#fff"></div>
<div class="t" style="left:1007px;top:1073.5px;font-size:22px;line-height:31px;color:#fff;letter-spacing:-0.127px;-webkit-text-stroke:0.400px #fff;">Send</div>
<svg class="i" style="left:1099.0px;top:1075.5px;width:27px;height:27px" viewBox="0 0 24 24" fill="#fff" ><path d="M7 10l5 5 5-5z"/></svg>
<svg class="i" style="left:1065.500px;top:1092.500px;width:27px;height:25px" viewBox="0 0 26 30" preserveAspectRatio="none"><path d="M8 2.500c1.300 0 2.200 1 2.200 2.200v8.300l1.200.2V11c0-1 .8-1.700 1.800-1.700s1.800.7 1.800 1.700v2.600l1 .2v-1.500c0-.9.7-1.600 1.700-1.600s1.700.7 1.700 1.600v2l.8.2c.9-.3 2 .3 2 1.500v5c0 2.600-.8 4.200-1.600 5.400v2.100H9.800v-2.100c-1.600-1.500-3.500-4.300-5.600-7.600-.8-1.200-.3-2.300.6-2.800.9-.4 1.900-.100 2.500.8l.5.7V4.700c0-1.200.9-2.200 2.200-2.200z" transform="translate(-2,0)" fill="#fff" stroke="#1f1f1f" stroke-width="1.500" stroke-linejoin="round"/><path d="M10.500 21v5M13.500 21v5M16.500 21v5" stroke="#1f1f1f" stroke-width="1.300"/></svg>
<svg class="i" style="left:1168.5px;top:1071.0px;width:36px;height:36px" viewBox="0 0 24 24" fill="#444746" ><path d="M5 17v2h14v-2H5zm4.5-4.200h5l.9 2.200h2.100L12.750 4h-1.500L6.500 15h2.100l.9-2.200zM12 5.980L13.870 11h-3.740L12 5.980z"/></svg>
<svg class="i" style="left:1230px;top:1076px;width:28px;height:28px" viewBox="0 0 28 28" fill="none" stroke="#444746" stroke-width="2.500" stroke-linejoin="round"><path d="M21.500 4.200l2.400 2.400c.5.5.5 1.200 0 1.700L9.300 22.900 4.500 24l1.100-4.800L20.200 4.600c.3-.5.900-.8 1.300-.4z"/><path d="M17.800 7.200l3.400 3.400"/><path d="M6.500 0.500l1.500 3.700 3.700 1.500-3.700 1.500-1.500 3.700-1.500-3.700-3.700-1.500 3.700-1.500z" fill="#444746" stroke="none"/></svg>
<svg class="i" style="left:1285.5px;top:1076.0px;width:28px;height:28px" viewBox="0 0 24 24" fill="#444746" ><path d="M16.5 6v11.5c0 2.21-1.79 4-4 4s-4-1.79-4-4V5c0-1.38 1.12-2.5 2.5-2.5s2.5 1.12 2.5 2.5v10.5c0 .55-.45 1-1 1s-1-.45-1-1V6H10v9.5c0 1.38 1.12 2.5 2.5 2.5s2.5-1.12 2.5-2.5V5c0-2.21-1.79-4-4-4S7 2.79 7 5v12.5c0 3.04 2.46 5.5 5.5 5.5s5.5-2.46 5.5-5.5V6h-1.5z" stroke="#444746" stroke-width=".5"/></svg>
<svg class="i" style="left:1341.0px;top:1073.5px;width:31px;height:31px" viewBox="0 0 24 24" fill="#444746" ><path d="M3.9 12c0-1.71 1.39-3.1 3.1-3.1h4V7H7c-2.76 0-5 2.24-5 5s2.24 5 5 5h4v-1.9H7c-1.71 0-3.1-1.39-3.1-3.1zM8 13h8v-2H8v2zm9-6h-4v1.9h4c1.710 0 3.1 1.39 3.1 3.1s-1.39 3.1-3.1 3.1h-4V17h4c2.76 0 5-2.24 5-5s-2.24-5-5-5z" stroke="#444746" stroke-width=".4"/></svg>
<svg class="i" style="left:1399.0px;top:1074.0px;width:30px;height:30px" viewBox="0 0 24 24" fill="#444746" ><path d="M11.99 2C6.47 2 2 6.48 2 12s4.47 10 9.99 10C17.52 22 22 17.52 22 12S17.52 2 11.99 2zM12 20c-4.42 0-8-3.58-8-8s3.58-8 8-8 8 3.58 8 8-3.58 8-8 8zm3.5-9c.83 0 1.5-.67 1.5-1.5S16.33 8 15.5 8 14 8.67 14 9.5s.67 1.5 1.5 1.5zm-7 0c.83 0 1.5-.67 1.5-1.5S9.33 8 8.5 8 7 8.67 7 9.5 7.67 11 8.5 11zm3.5 6.5c2.33 0 4.31-1.46 5.11-3.5H6.89c.8 2.04 2.78 3.5 5.11 3.5z"/></svg>
<svg class="i" style="left:1456px;top:1076px;width:30px;height:28px" viewBox="0 0 30 28" fill="none" stroke="#444746" stroke-width="2.400" stroke-linejoin="round"><path d="M12.500 2.500h5c.8 0 1.500.4 1.900 1.100l7.600 13.100c.4.700.4 1.500 0 2.200l-2.400 4.300c-.4.700-1.100 1.100-1.900 1.100H7.300c-.8 0-1.500-.4-1.900-1.100L3 18.900c-.4-.7-.4-1.500 0-2.200L10.600 3.600c.4-.7 1.100-1.100 1.900-1.100z"/><path d="M15 10l4.300 7.500h-8.600z"/></svg>
<svg class="i" style="left:1512.0px;top:1074.0px;width:30px;height:30px" viewBox="0 0 24 24" fill="#444746" ><path d="M19 5v14H5V5h14m0-2H5c-1.1 0-2 .9-2 2v14c0 1.1.9 2 2 2h14c1.1 0 2-.9 2-2V5c0-1.1-.9-2-2-2zm-4.86 8.86l-3 3.87L9 13.14 6 17h12l-3.86-5.14z"/></svg>
<svg class="i" style="left:1572px;top:1074px;width:28px;height:31px" viewBox="0 0 30 32" fill="none" stroke="#444746" stroke-width="2.300"><path d="M8 12V8.500a5.500 5.500 0 0 1 11 0V12" /><path d="M14 29H5.500a1.500 1.500 0 0 1-1.500-1.500V13.500A1.500 1.500 0 0 1 5.500 12h16a1.500 1.500 0 0 1 1.500 1.500V17" stroke-linejoin="round"/><circle cx="21.500" cy="24.500" r="5.800" fill="#444746" stroke="none"/><path d="M21.500 21.500v3.300l2.300 1.300" stroke="#fff" stroke-width="1.500"/></svg>
<svg class="i" style="left:1627px;top:1075px;width:28px;height:28px" viewBox="0 0 28 28" fill="none" stroke="#444746" stroke-width="2.200" stroke-linejoin="round"><path d="M19.500 3.500l4.500 4.500L9 23l-5.500 1.500L5 19z" /><path d="M16 4.500l-9 9M22.500 5.500L10 18" /></svg>
<svg class="i" style="left:1683.0px;top:1074.5px;width:30px;height:30px" viewBox="0 0 24 24" fill="#444746" ><path d="M12 8c1.1 0 2-.9 2-2s-.9-2-2-2-2 .9-2 2 .9 2 2 2zm0 2c-1.1 0-2 .9-2 2s.9 2 2 2 2-.9 2-2-.9-2-2-2zm0 6c-1.1 0-2 .9-2 2s.9 2 2 2 2-.9 2-2-.9-2-2-2z"/></svg>
<svg class="i" style="left:1846.0px;top:1073.5px;width:32px;height:32px" viewBox="0 0 24 24" fill="#444746" ><path d="M16 9v10H8V9h8m-1.500-6h-5l-1 1H5v2h14V4h-3.5l-1-1zM18 7H6v12c0 1.1.9 2 2 2h8c1.1 0 2-.9 2-2V7zM9.5 10.500h1.700v7H9.500zm3.300 0h1.700v7h-1.700z"/></svg>
<svg class="i" style="left:1958px;top:22px;width:29px;height:29px" viewBox="0 0 29 29"><rect x="1" y="1" width="27" height="27" rx="3" fill="#4285f4"/><path d="M21 1h4a3 3 0 0 1 3 3v17h-7z" fill="#fbbc04"/><path d="M1 21h20v7H4a3 3 0 0 1-3-3z" fill="#34a853"/><path d="M21 21h7l-7 7z" fill="#ea4335"/><rect x="4.500" y="4.500" width="17" height="17" fill="#fff"/><text x="13" y="18" font-family="Liberation Sans" font-size="12" font-weight="700" fill="#4285f4" text-anchor="middle">31</text></svg>
<div class="b" style="left:1960px;top:112px;width:26px;height:26px;background:#f4ba33;border-radius:4px"></div>
<svg class="i" style="left:1966px;top:117px;width:14px;height:17px" viewBox="0 0 15 18" fill="#fdf6e3"><circle cx="7.500" cy="6.500" r="4.800"/><rect x="5.200" y="10" width="4.600" height="3.200"/><rect x="5.200" y="14.200" width="4.600" height="1.600"/></svg>
<svg class="i" style="left:1957px;top:197px;width:31px;height:31px" viewBox="0 0 24 24" fill="#2a9a55"><path d="M6.600 10.800c1.400 2.800 3.800 5.100 6.600 6.600l2.200-2.200c.3-.3.700-.4 1-.2 1.100.4 2.300.6 3.600.6.600 0 1 .4 1 1V20c0 .6-.4 1-1 1C10.600 21 3 13.400 3 4c0-.6.500-1 1-1h3.500c.6 0 1 .4 1 1 0 1.300.2 2.500.6 3.600.1.300 0 .7-.2 1z"/><path d="M12.500 3.200a8.300 8.300 0 0 1 8.300 8.300h-2.600a5.700 5.700 0 0 0-5.700-5.700z"/><path d="M12.500 7a4.500 4.500 0 0 1 4.500 4.500h-4.500z"/></svg>
<svg class="i" style="left:1957px;top:285px;width:30px;height:30px" viewBox="0 0 30 30"><circle cx="15" cy="15" r="14.300" fill="#4a80e6"/><path d="M12.500 20.500L22 10" stroke="#fff" stroke-width="4.300" fill="none" stroke-linecap="round"/><circle cx="8.300" cy="16.500" r="2.300" fill="#f2c94c"/></svg>
<div class="b" style="left:1956px;top:363px;width:32px;height:1.5px;background:#dfe2e7"></div>
<svg class="i" style="left:1958.0px;top:413.0px;width:31px;height:31px" viewBox="0 0 24 24" fill="#1f1f1f" ><path d="M10.500 4.500c.28 0 .5.22.5.5v2h6v6h2c.28 0 .5.22.5.5s-.22.5-.5.5h-2v6h-2.120c-.68-1.750-2.390-3-4.380-3s-3.700 1.250-4.380 3H4v-2.120c1.750-.68 3-2.390 3-4.380 0-1.990-1.240-3.700-2.990-4.380L4 7h6V5c0-.28.22-.5.5-.5m0-2C9.120 2.500 8 3.620 8 5H4c-1.100 0-1.990.9-1.990 2v3.800h.29c1.490 0 2.700 1.210 2.700 2.700s-1.210 2.700-2.700 2.700H2V20c0 1.100.9 2 2 2h3.800v-.3c0-1.490 1.210-2.700 2.700-2.700s2.700 1.210 2.700 2.700v.3H17c1.100 0 2-.9 2-2v-4c1.380 0 2.500-1.120 2.500-2.500S20.380 11 19 11V7c0-1.100-.9-2-2-2h-4c0-1.380-1.120-2.500-2.500-2.500z"/></svg>
<svg class="i" style="left:1962px;top:506px;width:22px;height:22px" viewBox="0 0 22 22" stroke="#1f1f1f" stroke-width="2.300"><path d="M11 0.500v21M0.500 11h21"/></svg>
<svg class="i" style="left:1955.0px;top:1081.0px;width:34px;height:34px" viewBox="0 0 24 24" fill="#1f1f1f" ><path d="M10 6L8.59 7.41 13.17 12l-4.58 4.59L10 18l6-6z"/></svg>
</body></html>
